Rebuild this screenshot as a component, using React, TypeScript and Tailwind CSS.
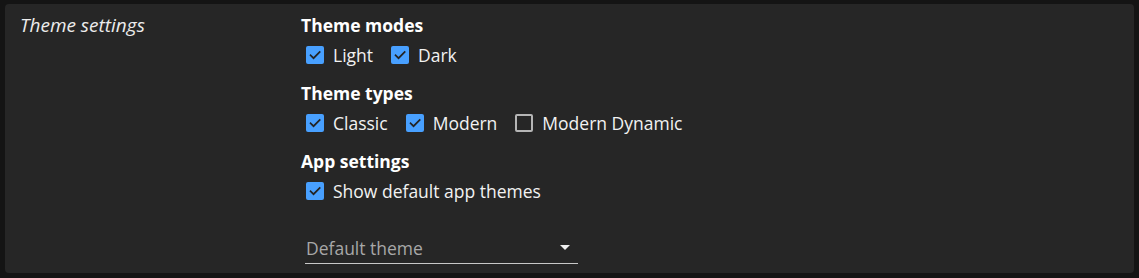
import { useState } from "react";

type Option = { id: string; label: string };

const CheckBox = ({
  label,
  checked,
  onToggle,
}: {
  label: string;
  checked: boolean;
  onToggle: () => void;
}) => {
  return (
    <label
      onClick={onToggle}
      className="flex items-center mr-[13px] cursor-pointer select-none"
    >
      <span
        className={
          checked
            ? "ml-[5px] w-[18px] h-[18px] rounded-[2px] bg-[#48a0ff] flex items-center justify-center"
            : "ml-[5px] w-[18px] h-[18px] rounded-[2px] border-2 border-[#b5b5b5] flex items-center justify-center"
        }
      >
        {checked && (
          <svg width="14" height="14" viewBox="0 0 24 24" fill="none">
            <path
              d="M4.5 12.5l5 5L20 7"
              stroke="#232323"
              strokeWidth="3"
              strokeLinecap="square"
            />
          </svg>
        )}
      </span>
      <span className="ml-[9px] text-[17.5px] leading-6 text-[#f2f2f2]">
        {label}
      </span>
    </label>
  );
};

const Section = ({
  title,
  options,
  values,
  onToggle,
}: {
  title: string;
  options: Option[];
  values: Record<string, boolean>;
  onToggle: (id: string) => void;
}) => (
  <div className="mb-[9px]">
    <div className="h-6 leading-6 font-bold text-[17.5px] text-white">
      {title}
    </div>
    <div className="flex items-center h-[35px]">
      {options.map((o) => (
        <CheckBox
          key={o.id}
          label={o.label}
          checked={!!values[o.id]}
          onToggle={() => onToggle(o.id)}
        />
      ))}
    </div>
  </div>
);

export default function App() {
  const [values, setValues] = useState<Record<string, boolean>>({
    light: true,
    dark: true,
    classic: true,
    modern: true,
    modernDynamic: false,
    showDefault: true,
  });

  const toggle = (id: string) =>
    setValues((v) => ({ ...v, [id]: !v[id] }));

  return (
    <div
      className="w-[1139px] h-[278px] bg-[#141414] pt-1 pl-[5px] pr-[5px]"
      style={{ fontFamily: '"Open Sans", "Noto Sans", sans-serif' }}
    >
      <div className="h-[269px] rounded-[4px] bg-[#262626] flex pl-[15px] pt-[9px]">
        <div className="w-[281px] h-6 leading-6 italic text-[19px] text-[#ececec]">
          Theme settings
        </div>
        <div className="flex flex-col">
          <Section
            title="Theme modes"
            options={[
              { id: "light", label: "Light" },
              { id: "dark", label: "Dark" },
            ]}
            values={values}
            onToggle={toggle}
          />
          <Section
            title="Theme types"
            options={[
              { id: "classic", label: "Classic" },
              { id: "modern", label: "Modern" },
              { id: "modernDynamic", label: "Modern Dynamic" },
            ]}
            values={values}
            onToggle={toggle}
          />
          <Section
            title="App settings"
            options={[{ id: "showDefault", label: "Show default app themes" }]}
            values={values}
            onToggle={toggle}
          />
          <div className="ml-1 mt-[15px] w-[273px] h-[32px] border-b border-[#c8c8c8] flex items-center justify-between pl-px pr-[8px]">
            <span className="text-[17.5px] leading-6 text-[#a8a8a8]">
              Default theme
            </span>
            <svg width="10" height="5" viewBox="0 0 10 5">
              <path d="M0 0h10L5 5z" fill="#f0f0f0" />
            </svg>
          </div>
        </div>
      </div>
    </div>
  );
}
